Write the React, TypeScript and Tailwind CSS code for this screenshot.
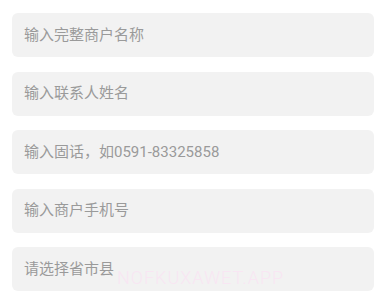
import React from 'react';

const fields = [
  '输入完整商户名称',
  '输入联系人姓名',
  '输入固话，如0591-83325858',
  '输入商户手机号',
  '请选择省市县',
];

export default function App() {
  return (
    <div
      className="relative w-[383px] h-[298px] overflow-hidden bg-white"
      style={{ fontFamily: 'Roboto, "Noto Sans CJK SC", sans-serif' }}
    >
      <div className="flex flex-col gap-[14.5px] pt-[13px] pl-[12px] pr-[9px]">
        {fields.map((f) => (
          <div
            key={f}
            className="h-[44px] rounded-[6px] bg-[#f2f2f2] flex items-center px-[12px] text-[15px] text-[#9a9a9a]"
          >
            {f}
          </div>
        ))}
      </div>
      <div className="absolute left-[117px] top-[264px] text-[18px] font-light text-[#f8e6f3] tracking-[1px] pointer-events-none">
        NOFKUXAWET.APP
      </div>
    </div>
  );
}
